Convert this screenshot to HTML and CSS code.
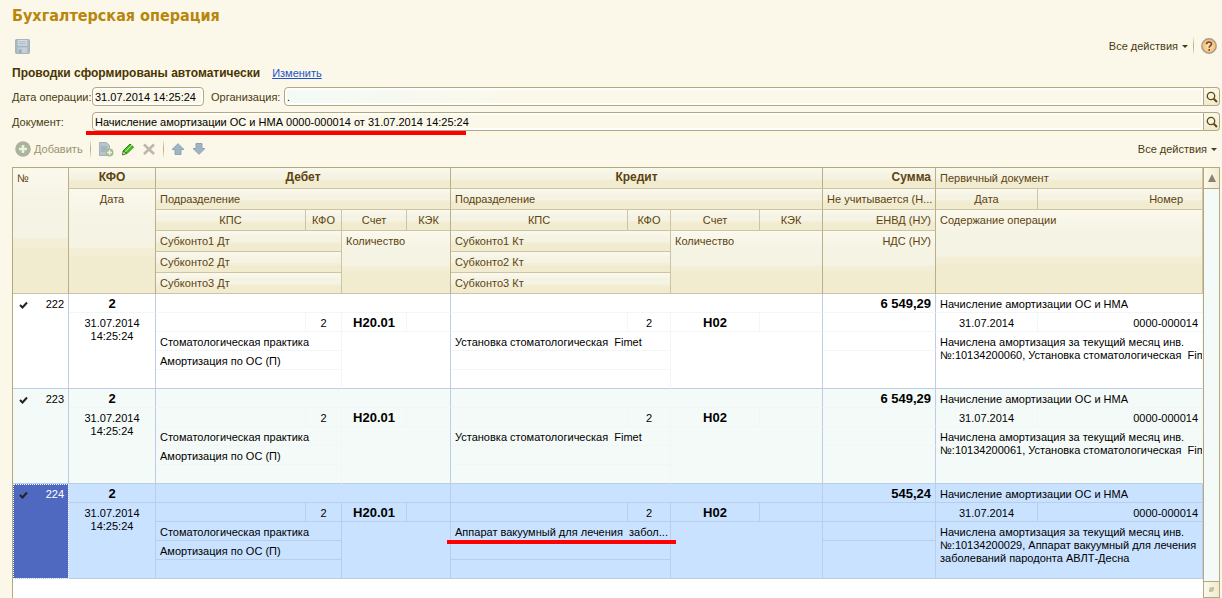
FILE: index.html
```html
<!DOCTYPE html>
<html lang="ru">
<head>
<meta charset="utf-8">
<title>Бухгалтерская операция</title>
<link rel="stylesheet" href="styles.css">
</head>
<body>
<svg class="defs" aria-hidden="true">
  <symbol id="tick" viewBox="0 0 9 8"><path d="M1 4l2.500 2.500L8 1.500" fill="none" stroke="currentColor" stroke-width="2"/></symbol>
  <symbol id="lens" viewBox="0 0 12 12"><circle cx="5" cy="5" r="3.700" fill="none" stroke="#5a4a12" stroke-width="1.300"/><path d="M7.700 7.700L11 11" stroke="#5a4a12" stroke-width="2"/></symbol>
</svg>
<main class="page">
  <h1 class="title">Бухгалтерская операция</h1>
  <div class="bar bar-top">
    <button class="tool" aria-label="Записать"><svg width="15" height="15" viewBox="0 0 16 16"><rect x=".5" y=".5" width="15" height="15" rx="1" fill="#a9b9c4" stroke="#9fb0bc"/><rect x="3" y="1" width="10" height="6" fill="#d5dde0"/><path d="M4 3h8M4 5h8" stroke="#a9b8c2"/><rect x="3" y="9" width="10" height="6" fill="#c5d0d6"/><rect x="4" y="11" width="3" height="4" fill="#9aabb8"/></svg></button>
    <div class="bar-end">
      <button class="menu">Все действия<span class="caret"></span></button>
      <span class="sep"></span>
      <button class="tool help" aria-label="Справка"><svg width="16" height="16" viewBox="0 0 16 16"><defs><radialGradient id="hg"><stop offset="0" stop-color="#ffe9c0"/><stop offset="1" stop-color="#f6b868"/></radialGradient></defs><circle cx="8" cy="8" r="7.200" fill="url(#hg)" stroke="#a89c8c" stroke-width="1.400"/><path d="M5.500 6.300C5.500 3.200 10.500 3.300 10.500 6c0 1.700-2.300 1.800-2.300 3.700M8.200 11v1.700" fill="none" stroke="#6b4a2a" stroke-width="1.600"/></svg></button>
    </div>
  </div>
  <div class="notice"><strong class="notice-text">Проводки сформированы автоматически</strong><a class="link" href="#">Изменить</a></div>
  <form class="form">
    <div class="line">
      <label class="label" for="date">Дата операции:</label>
      <input class="field field-date" id="date" value="31.07.2014 14:25:24">
      <label class="label label-org" for="org">Организация:</label>
      <div class="combo"><input class="field field-org" id="org" value="."><button type="button" class="pick" aria-label="Выбрать организацию"><svg width="12" height="12"><use href="#lens"/></svg></button></div>
    </div>
    <div class="line">
      <label class="label" for="doc">Документ:</label>
      <div class="combo"><input class="field" id="doc" value="Начисление амортизации ОС и НМА 0000-000014 от 31.07.2014 14:25:24"><button type="button" class="pick" aria-label="Выбрать документ"><svg width="12" height="12"><use href="#lens"/></svg></button><span class="mark mark-doc"></span></div>
    </div>
  </form>
  <div class="bar bar-list">
    <button class="tool add" disabled><svg width="16" height="16" viewBox="0 0 16 16"><circle cx="8" cy="8" r="7" fill="#a8b59a" stroke="#b0b09c" stroke-width="1.500"/><path d="M8 4v8M4 8h8" stroke="#eef0e0" stroke-width="2.600"/></svg>Добавить</button>
    <span class="sep"></span>
    <button class="tool" aria-label="Скопировать"><svg width="16" height="16" viewBox="0 0 16 16"><path d="M1.500 1.500h7l3 3v10h-10z" fill="#b7c4cb" stroke="#a3b3bd"/><path d="M3 6h6M3 8h6M3 10h4" stroke="#93a6b2"/><circle cx="11.500" cy="11.500" r="4" fill="#a8b894"/><path d="M11.500 9v5M9 11.500h5" stroke="#eef0e0" stroke-width="1.600"/></svg></button>
    <button class="tool" aria-label="Изменить"><svg width="14" height="14" viewBox="0 0 14 14"><path d="M2 9L9 2l3.500 3L6 11.500z" fill="#4fc02c" stroke="#23810f"/><path d="M4 10l7-7" stroke="#a5ec80"/><path d="M2 9l4 2.500-4.500 1.500z" fill="#e8d49c" stroke="#23640f" stroke-width=".8"/></svg></button>
    <button class="tool" aria-label="Удалить"><svg width="14" height="14" viewBox="0 0 14 14"><path d="M2 2.500l10 9.500M12 2.500L2 12" stroke="#bfb4ae" stroke-width="2.600"/></svg></button>
    <span class="sep"></span>
    <button class="tool" aria-label="Вверх"><svg width="14" height="12" viewBox="0 0 14 12"><path d="M7 .7L13 6.500h-3V11.500H4V6.500H1z" fill="#9fb4c4" stroke="#8ea3b3"/></svg></button>
    <button class="tool" aria-label="Вниз"><svg width="14" height="12" viewBox="0 0 14 12"><path d="M7 11.300L13 5.500h-3V.5H4v5H1z" fill="#9fb4c4" stroke="#8ea3b3"/></svg></button>
    <div class="bar-end"><button class="menu">Все действия<span class="caret"></span></button></div>
  </div>
  <section class="grid-frame">
    <div class="grid-body">
      <table class="grid">
        <colgroup><col class="w56"><col class="w87"><col class="w150"><col class="w36"><col class="w65"><col class="w44"><col class="w177"><col class="w43"><col class="w89"><col class="w63"><col class="w113"><col class="w102"><col></colgroup>
        <thead>
          <tr><th rowspan="6" class="main">№</th><th class="c b main">КФО</th><th colspan="4" class="c b main">Дебет</th><th colspan="4" class="c b main">Кредит</th><th class="r b main">Сумма</th><th colspan="2">Первичный документ</th></tr>
          <tr><th rowspan="5" class="c main">Дата</th><th colspan="4" class="main">Подразделение</th><th colspan="4" class="main">Подразделение</th><th class="r main">Не учитывается (Н...</th><th class="c">Дата</th><th class="r num">Номер</th></tr>
          <tr><th class="c">КПС</th><th class="c">КФО</th><th class="c">Счет</th><th class="c main">КЭК</th><th class="c">КПС</th><th class="c">КФО</th><th class="c">Счет</th><th class="c main">КЭК</th><th class="r main">ЕНВД (НУ)</th><th colspan="2" rowspan="4">Содержание операции</th></tr>
          <tr><th colspan="2">Субконто1 Дт</th><th colspan="2" rowspan="3" class="main">Количество</th><th colspan="2">Субконто1 Кт</th><th colspan="2" rowspan="3" class="main">Количество</th><th rowspan="3" class="r main">НДС (НУ)</th></tr>
          <tr><th colspan="2">Субконто2 Дт</th><th colspan="2">Субконто2 Кт</th></tr>
          <tr><th colspan="2">Субконто3 Дт</th><th colspan="2">Субконто3 Кт</th></tr>
        </thead>
        <tbody class="entry">
          <tr><td rowspan="5" class="no main last"><div class="no-in"><svg class="tick" width="9" height="8"><use href="#tick"/></svg>222</div></td><td class="c b main">2</td><td colspan="4" class="main"></td><td colspan="4" class="main"></td><td class="r b main">6 549,29</td><td colspan="2">Начисление амортизации ОС и НМА</td></tr>
          <tr><td rowspan="4" class="c main last">31.07.2014<br>14:25:24</td><td></td><td class="c">2</td><td class="c b">Н20.01</td><td class="main"></td><td></td><td class="c">2</td><td class="c b">Н02</td><td class="main"></td><td class="main"></td><td class="c">31.07.2014</td><td class="r">0000-000014</td></tr>
          <tr><td colspan="2">Стоматологическая практика</td><td colspan="2" rowspan="3" class="main last"></td><td colspan="2">Установка стоматологическая  Fimet</td><td colspan="2" rowspan="3" class="main last"></td><td class="main"></td><td colspan="2" rowspan="3" class="last">Начислена амортизация за текущий месяц инв.<br>№:10134200060, Установка стоматологическая  Fimet</td></tr>
          <tr><td colspan="2">Амортизация по ОС (П)</td><td colspan="2"></td><td rowspan="2" class="main last"></td></tr>
          <tr><td colspan="2" class="last"></td><td colspan="2" class="last"></td></tr>
        </tbody>
        <tbody class="entry even">
          <tr><td rowspan="5" class="no main last"><div class="no-in"><svg class="tick" width="9" height="8"><use href="#tick"/></svg>223</div></td><td class="c b main">2</td><td colspan="4" class="main"></td><td colspan="4" class="main"></td><td class="r b main">6 549,29</td><td colspan="2">Начисление амортизации ОС и НМА</td></tr>
          <tr><td rowspan="4" class="c main last">31.07.2014<br>14:25:24</td><td></td><td class="c">2</td><td class="c b">Н20.01</td><td class="main"></td><td></td><td class="c">2</td><td class="c b">Н02</td><td class="main"></td><td class="main"></td><td class="c">31.07.2014</td><td class="r">0000-000014</td></tr>
          <tr><td colspan="2">Стоматологическая практика</td><td colspan="2" rowspan="3" class="main last"></td><td colspan="2">Установка стоматологическая  Fimet</td><td colspan="2" rowspan="3" class="main last"></td><td class="main"></td><td colspan="2" rowspan="3" class="last">Начислена амортизация за текущий месяц инв.<br>№:10134200061, Установка стоматологическая  Fimet</td></tr>
          <tr><td colspan="2">Амортизация по ОС (П)</td><td colspan="2"></td><td rowspan="2" class="main last"></td></tr>
          <tr><td colspan="2" class="last"></td><td colspan="2" class="last"></td></tr>
        </tbody>
        <tbody class="entry selected">
          <tr><td rowspan="5" class="no main last"><div class="no-in"><svg class="tick" width="9" height="8"><use href="#tick"/></svg>224</div></td><td class="c b main">2</td><td colspan="4" class="main"></td><td colspan="4" class="main"></td><td class="r b main">545,24</td><td colspan="2">Начисление амортизации ОС и НМА</td></tr>
          <tr><td rowspan="4" class="c main last">31.07.2014<br>14:25:24</td><td></td><td class="c">2</td><td class="c b">Н20.01</td><td class="main"></td><td></td><td class="c">2</td><td class="c b">Н02</td><td class="main"></td><td class="main"></td><td class="c">31.07.2014</td><td class="r">0000-000014</td></tr>
          <tr><td colspan="2">Стоматологическая практика</td><td colspan="2" rowspan="3" class="main last"></td><td colspan="2" class="marked">Аппарат вакуумный для лечения  забол...<span class="mark mark-cell"></span></td><td colspan="2" rowspan="3" class="main last"></td><td class="main"></td><td colspan="2" rowspan="3" class="last">Начислена амортизация за текущий месяц инв.<br>№:10134200029, Аппарат вакуумный для лечения<br>заболеваний пародонта АВЛТ-Десна</td></tr>
          <tr><td colspan="2">Амортизация по ОС (П)</td><td colspan="2"></td><td rowspan="2" class="main last"></td></tr>
          <tr><td colspan="2" class="last"></td><td colspan="2" class="last"></td></tr>
        </tbody>
      </table>
    </div>
    <div class="scroll">
      <button class="scroll-btn" aria-label="Прокрутить вверх"><svg width="8" height="8" viewBox="0 0 8 8"><path d="M4 0l4 8H0z" fill="#8a8172"/></svg></button>
      <div class="scroll-track"></div>
      <div class="scroll-thumb"><span class="grip"></span></div>
    </div>
  </section>
</main>
</body>
</html>
```
FILE: styles.css
```css
* { box-sizing: border-box; }
body {
  margin: 0;
  background: #fbf8ea;
  color: #4a3a10;
  font: 11px/13px "Liberation Sans", Arial, sans-serif;
}
button, input { font: inherit; color: inherit; }
button { border: 0; padding: 0; background: none; }
.defs { position: absolute; width: 0; height: 0; }
.page {
  display: flex;
  flex-direction: column;
  height: 100vh;
  padding: 0 2px 0 12px;
  overflow: hidden;
}
.title {
  margin: 0;
  font: bold 16px/32px "DejaVu Sans Condensed", "Noto Sans", sans-serif;
  color: #b8860b;
}
.bar { display: flex; align-items: center; flex: none; }
.bar-top { height: 28px; padding: 0 3px; }
.bar-list { height: 36px; gap: 7px; padding: 0 3px; }
.bar-end { display: flex; align-items: center; gap: 5px; margin-left: auto; }
.tool { display: flex; align-items: center; }
.add { gap: 3px; color: #9c9270; }
.menu { display: flex; align-items: center; gap: 4px; }
.caret { border: 3px solid transparent; border-top-color: #4a3a10; border-bottom: 0; }
.sep { width: 1px; height: 18px; background: linear-gradient(#f3eed8, #b5ab83, #f3eed8); }
.help { margin-left: 2px; }
.notice { display: flex; align-items: center; gap: 12px; height: 27px; flex: none; }
.notice-text { color: #4a3400; font-size: 12px; line-height: 15px; }
.link { color: #1d54c4; line-height: 15px; }
.form { display: flex; flex-direction: column; gap: 6px; flex: none; }
.line { display: flex; align-items: center; height: 19px; }
.label { width: 80px; padding-top: 2px; white-space: nowrap; flex: none; }
.label-org { width: 73px; margin-left: 7px; }
.field {
  height: 19px;
  min-width: 0;
  padding: 0 2px;
  border: 1px solid #b3a97f;
  border-radius: 4px;
  background: #fbf8ea;
  box-shadow: inset 0 0 0 2px #fff;
  color: #000;
}
.field-date { width: 112px; }
.combo { position: relative; display: flex; flex: 1; min-width: 0; }
.combo .field { flex: 1; border-radius: 4px 0 0 4px; }
.combo .field-org { background: linear-gradient(90deg, #f3faf6, #fbf8ea 240px); }
.pick {
  display: flex;
  align-items: center;
  justify-content: center;
  width: 16px;
  height: 19px;
  border: 1px solid #b3a97f;
  border-left: 0;
  border-radius: 0 4px 4px 0;
  background: linear-gradient(#fbf9ec, #f1ebcf);
}
.mark { position: absolute; height: 4px; background: #f00; }
.mark-doc { left: -6px; bottom: -4px; width: 380px; }
.mark-cell { left: -4px; bottom: -4px; width: 229px; z-index: 1; }
.grid-frame {
  display: flex;
  flex: 1;
  min-height: 0;
  border: 1px solid #b3a97f;
  border-bottom: 0;
  background: #fff;
}
.grid-body { flex: 1; min-width: 0; overflow: hidden; }
.grid { width: 100%; table-layout: fixed; border-collapse: separate; border-spacing: 0; }
.w56 { width: 56px; } .w87 { width: 87px; } .w150 { width: 150px; } .w36 { width: 36px; }
.w65 { width: 65px; } .w44 { width: 44px; } .w177 { width: 177px; } .w43 { width: 43px; }
.w89 { width: 89px; } .w63 { width: 63px; } .w113 { width: 113px; } .w102 { width: 102px; }
.grid th, .grid td {
  padding: 4px 4px 0;
  text-align: left;
  vertical-align: top;
  font-weight: normal;
  white-space: pre;
  overflow: hidden;
}
.grid th {
  height: 21px;
  border-right: 1px solid #ccc4a4;
  border-bottom: 1px solid #ccc4a4;
  background: linear-gradient(#fbf9ec, #f5f3e4 30%, #f5f3e4 56%, #f4eed6 57%, #f4eed6 64%, #f1ebcf 65%);
  color: #5c430f;
}
.grid th.main { border-right-color: #b9af8a; }
.grid td {
  height: 19px;
  border-right: 1px solid #f1f7f6;
  border-bottom: 1px solid #f1f7f6;
  color: #000;
}
.grid td.main { border-right-color: #bccde6; }
.grid td.last { border-bottom-color: #bccde6; }
.even { background: #f4faf7; }
.selected { background: #c9e2ff; }
.grid .selected td { border-color: #bccde6; }
.grid .c { text-align: center; }
.grid .r { text-align: right; }
.grid .b { padding-top: 3px; font-weight: bold; font-size: 13px; }
.grid th.b { font-size: 12px; }
.grid .num { padding-right: 19px; }
.grid td.marked { position: relative; overflow: visible; }
.no-in { display: flex; align-items: center; justify-content: space-between; padding-left: 2px; }
.tick { color: #222; }
.grid .selected .no {
  background: #5069c0;
  color: #fff;
  outline: 1px dotted #fff;
  outline-offset: -1px;
}
.scroll {
  display: flex;
  flex-direction: column;
  width: 16px;
  border-left: 1px solid #b3a97f;
  background: #f4faf7;
}
.scroll-btn {
  display: flex;
  align-items: center;
  justify-content: center;
  height: 21px;
  border-bottom: 1px solid #b3a97f;
  background: linear-gradient(90deg, #fbf9ec, #f1ebcf);
}
.scroll-track { flex: 1; }
.scroll-thumb {
  display: flex;
  align-items: center;
  justify-content: center;
  height: 17px;
  border: solid #b3a97f;
  border-width: 1px 0;
  background: linear-gradient(90deg, #fbf9ec, #f1ebcf);
}
.grip { width: 5px; height: 5px; border-radius: 3px 0; background: #c9c1a6; }
```
